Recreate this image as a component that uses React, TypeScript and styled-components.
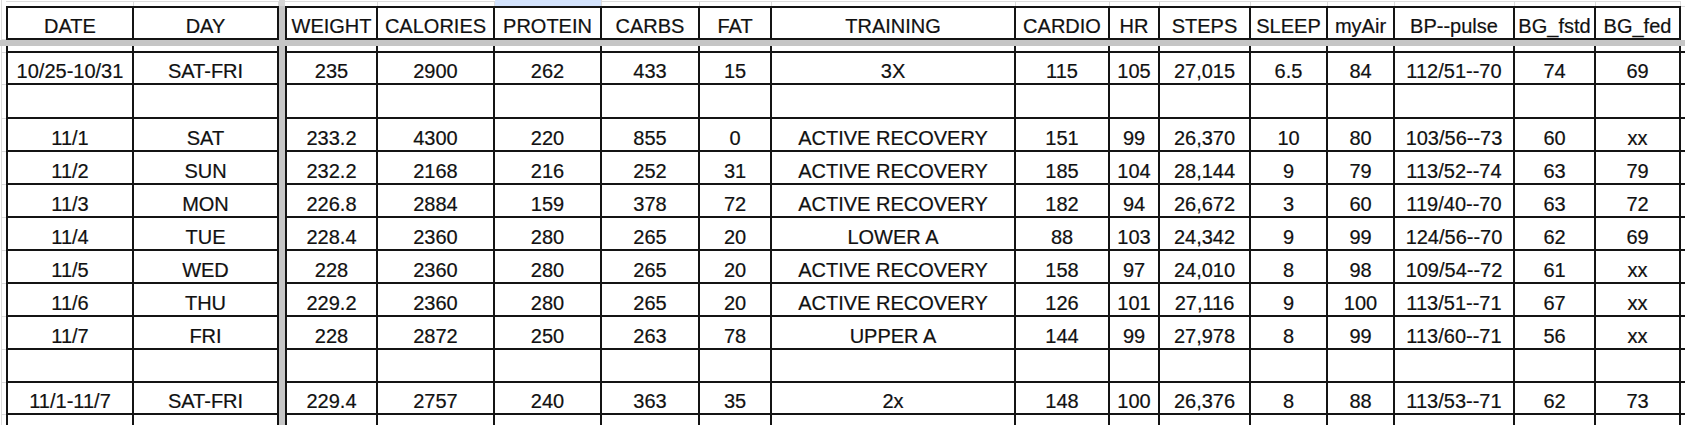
import React from "react";
import styled, { createGlobalStyle, css } from "styled-components";

const GlobalStyle = createGlobalStyle`
  html, body { margin: 0; padding: 0; background: #ffffff; }
  body { font-family: "Liberation Sans", Arial, sans-serif; }
`;

const TRACKS =
  "6px 128px 145px 6px 93px 117px 107px 98px 72px 244px 94px 50px 91px 77px 67px 120px 81px 85px 1fr";

const LINE = "#141414";
const GRID = "#dcdcdc";
const FROZEN = "#c6c6c6";

const Sheet = styled.div`
  width: 1685px;
  height: 425px;
  overflow: hidden;
  background: #ffffff;
  display: flex;
  flex-direction: column;
`;

const Row = styled.div<{ $h: number }>`
  display: grid;
  grid-template-columns: ${TRACKS};
  height: ${(p) => p.$h}px;
  flex: none;
`;

const Cell = styled.div<{ $lead?: boolean; $top?: boolean; $bottom?: boolean }>`
  box-sizing: border-box;
  min-width: 0;
  display: flex;
  justify-content: center;
  align-items: flex-end;
  border-right: 2px solid ${LINE};
  ${(p) => p.$lead && css`border-left: 2px solid ${LINE};`}
  ${(p) => p.$top && css`border-top: 2px solid ${LINE};`}
  ${(p) => p.$bottom && css`border-bottom: 2px solid ${LINE};`}
  font-size: 20px;
  line-height: 23px;
  color: #111111;
  -webkit-text-stroke: 0.2px #111111;
  white-space: nowrap;
  overflow: hidden;
`;

const TopCell = styled.div<{ $hl?: boolean }>`
  box-sizing: border-box;
  border-right: 1px solid ${GRID};
  ${(p) =>
    p.$hl
      ? css`background: #d3e3fd;`
      : css`
          border-top: 1px solid ${GRID};
          margin-top: 1px;
        `}
`;

const Lead = styled.div<{ $line?: boolean }>`
  box-sizing: border-box;
  margin-left: 1px;
  border-left: 1px solid ${GRID};
  ${(p) => p.$line && css`border-bottom: 1px solid ${GRID};`}
`;

const Tail = styled.div<{ $bottom?: boolean; $top?: boolean }>`
  box-sizing: border-box;
  ${(p) => p.$bottom && css`border-bottom: 2px solid ${LINE};`}
  ${(p) => p.$top && css`border-top: 1px solid ${GRID};`}
`;

const Gap = styled.div<{ $light?: boolean }>`
  background: ${(p) => (p.$light ? "#d6d6d6" : FROZEN)};
`;

const Band = styled.div`
  height: 6px;
  flex: none;
  background: ${FROZEN};
`;

const HEADERS = [
  "DATE", "DAY", "WEIGHT", "CALORIES", "PROTEIN", "CARBS", "FAT", "TRAINING",
  "CARDIO", "HR", "STEPS", "SLEEP", "myAir", "BP--pulse", "BG_fstd", "BG_fed",
];

const EMPTY = Array(16).fill("");

const ROWS: { h: number; values: string[] }[] = [
  { h: 32, values: ["10/25-10/31", "SAT-FRI", "235", "2900", "262", "433", "15", "3X", "115", "105", "27,015", "6.5", "84", "112/51--70", "74", "69"] },
  { h: 34, values: EMPTY },
  { h: 33, values: ["11/1", "SAT", "233.2", "4300", "220", "855", "0", "ACTIVE RECOVERY", "151", "99", "26,370", "10", "80", "103/56--73", "60", "xx"] },
  { h: 33, values: ["11/2", "SUN", "232.2", "2168", "216", "252", "31", "ACTIVE RECOVERY", "185", "104", "28,144", "9", "79", "113/52--74", "63", "79"] },
  { h: 33, values: ["11/3", "MON", "226.8", "2884", "159", "378", "72", "ACTIVE RECOVERY", "182", "94", "26,672", "3", "60", "119/40--70", "63", "72"] },
  { h: 33, values: ["11/4", "TUE", "228.4", "2360", "280", "265", "20", "LOWER A", "88", "103", "24,342", "9", "99", "124/56--70", "62", "69"] },
  { h: 33, values: ["11/5", "WED", "228", "2360", "280", "265", "20", "ACTIVE RECOVERY", "158", "97", "24,010", "8", "98", "109/54--72", "61", "xx"] },
  { h: 33, values: ["11/6", "THU", "229.2", "2360", "280", "265", "20", "ACTIVE RECOVERY", "126", "101", "27,116", "9", "100", "113/51--71", "67", "xx"] },
  { h: 33, values: ["11/7", "FRI", "228", "2872", "250", "263", "78", "UPPER A", "144", "99", "27,978", "8", "99", "113/60--71", "56", "xx"] },
  { h: 33, values: EMPTY },
  { h: 32, values: ["11/1-11/7", "SAT-FRI", "229.4", "2757", "240", "363", "35", "2x", "148", "100", "26,376", "8", "88", "113/53--71", "62", "73"] },
];

type LineProps = { values: string[]; h: number; top?: boolean; bottom?: boolean };

const SheetRow: React.FC<LineProps> = ({ values, h, top, bottom }) => (
  <Row $h={h}>
    <Lead $line={bottom} />
    {values.slice(0, 2).map((v, i) => (
      <Cell key={`f${i}`} $lead={i === 0} $top={top} $bottom={bottom}>
        {v}
      </Cell>
    ))}
    <Gap />
    {values.slice(2).map((v, i) => (
      <Cell key={`s${i}`} $lead={i === 0} $top={top} $bottom={bottom}>
        {v}
      </Cell>
    ))}
    <Tail $bottom={bottom && !top} $top={top} />
  </Row>
);

const TopStrip: React.FC = () => (
  <Row $h={6}>
    <Lead />
    <TopCell />
    <TopCell />
    <Gap $light />
    {HEADERS.slice(2).map((h, i) => (
      <TopCell key={h} $hl={i === 2} />
    ))}
    <Tail />
  </Row>
);

export default function App() {
  return (
    <>
      <GlobalStyle />
      <Sheet>
        <TopStrip />
        <SheetRow values={HEADERS} h={34} top bottom />
        <Band />
        <SheetRow values={EMPTY} h={7} bottom />
        {ROWS.map((r, i) => (
          <SheetRow key={i} values={r.values} h={r.h} bottom />
        ))}
        <SheetRow values={EMPTY} h={12} />
      </Sheet>
    </>
  );
}
